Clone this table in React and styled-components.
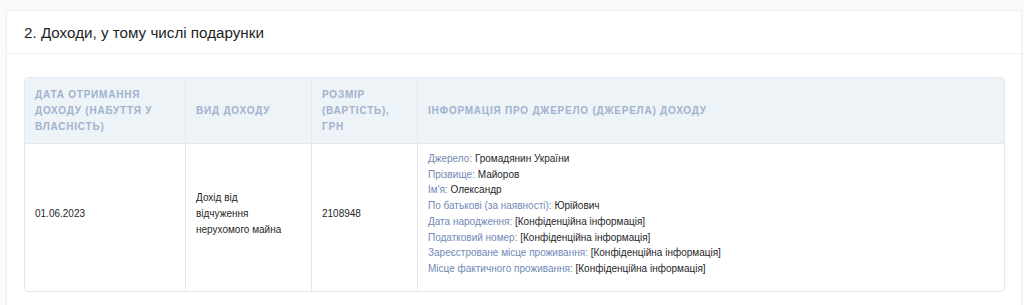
import React from "react";
import styled, { createGlobalStyle } from "styled-components";

const Global = createGlobalStyle`
  html, body { margin: 0; padding: 0; background: #f9fafb; }
  body { font-family: "Liberation Sans", Arial, sans-serif; color: #222; }
  * { box-sizing: border-box; }
`;

const Page = styled.div`
  padding: 10px 2px 0 6px;
  height: 305px;
  overflow: hidden;
`;

const Card = styled.section`
  background: #fff;
  border: 1px solid #eceff3;
  border-radius: 3px;
  min-height: 320px;
`;

const CardHeader = styled.header`
  height: 43px;
  padding: 0 17px;
  display: flex;
  align-items: center;
  border-bottom: 1px solid #eceff3;
`;

const Title = styled.h2`
  margin: 0;
  font-size: 15.2px;
  font-weight: 400;
  color: #1f1f1f;
`;

const CardBody = styled.div`
  padding: 23px 17px;
`;

const Table = styled.table`
  width: 981px;
  border-collapse: separate;
  border-spacing: 0;
  border: 1px solid #e3e8ee;
  border-radius: 4px;
  overflow: hidden;
`;

const Th = styled.th`
  width: ${(p) => (p.$w ? `${p.$w}px` : "auto")};
  background: #eef3f8;
  color: #a0b2ce;
  font-size: 10px;
  font-weight: 700;
  letter-spacing: 0.78px;
  text-transform: uppercase;
  text-align: left;
  line-height: 16px;
  padding: 9px 10px 8px;
  vertical-align: middle;
  border-bottom: 1px solid #e3e8ee;
  & + & { border-left: 1px solid #e3e8ee; }
`;

const Td = styled.td`
  font-size: 10px;
  line-height: 15.7px;
  color: #1f1f1f;
  padding: 7px 10px 14px;
  vertical-align: middle;
  & + & { border-left: 1px solid #e3e8ee; }
`;

const Wrap = styled.div`
  max-width: 90px;
`;

const Line = styled.div`
  white-space: nowrap;
`;

const Label = styled.span`
  color: #7189b4;
`;

const info = [
  ["Джерело:", "Громадянин України"],
  ["Прізвище:", "Майоров"],
  ["Ім'я:", "Олександр"],
  ["По батькові (за наявності):", "Юрійович"],
  ["Дата народження:", "[Конфіденційна інформація]"],
  ["Податковий номер:", "[Конфіденційна інформація]"],
  ["Зареєстроване місце проживання:", "[Конфіденційна інформація]"],
  ["Місце фактичного проживання:", "[Конфіденційна інформація]"],
];

export default function App() {
  return (
    <Page>
      <Global />
      <Card>
        <CardHeader>
          <Title>2. Доходи, у тому числі подарунки</Title>
        </CardHeader>
        <CardBody>
          <Table>
            <thead>
              <tr>
                <Th $w={160}>Дата отримання доходу (набуття у власність)</Th>
                <Th $w={126}>Вид доходу</Th>
                <Th $w={106}>Розмір (вартість), грн</Th>
                <Th>Інформація про джерело (джерела) доходу</Th>
              </tr>
            </thead>
            <tbody>
              <tr>
                <Td>01.06.2023</Td>
                <Td>
                  <Wrap>Дохід від відчуження нерухомого майна</Wrap>
                </Td>
                <Td>2108948</Td>
                <Td>
                  {info.map(([l, v]) => (
                    <Line key={l}>
                      <Label>{l}</Label> {v}
                    </Line>
                  ))}
                </Td>
              </tr>
            </tbody>
          </Table>
        </CardBody>
      </Card>
    </Page>
  );
}
